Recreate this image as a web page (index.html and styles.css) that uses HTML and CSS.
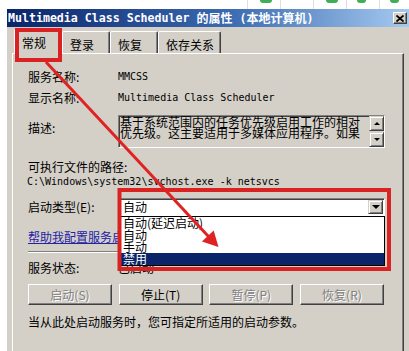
FILE: index.html
```html
<!DOCTYPE html>
<html lang="zh-CN">
<head>
<meta charset="utf-8">
<title>Multimedia Class Scheduler 的属性 (本地计算机)</title>
<link rel="stylesheet" href="styles.css">
</head>
<body>
<div class="top-strip">
  <div class="cell"><span class="blob"></span></div>
  <div class="cell"></div>
  <div class="cell"><span class="blob"></span></div>
  <div class="cell"><span class="blob narrow"></span></div>
  <div class="cell last"><span class="blob narrow"></span></div>
</div>
<div class="window">
  <div class="titlebar">
    <div class="title"><span class="t-lat">Multimedia Class Scheduler </span><span class="t-cjk">的属性</span><span class="t-lat"> (</span><span class="t-cjk">本地计算机</span><span class="t-lat">)</span></div>
    <div class="close-btn">
      <svg width="8" height="7" viewBox="0 0 8 7"><path d="M0.5 0.5 L7.5 6.5 M7.5 0.5 L0.5 6.5" stroke="#000" stroke-width="1.8" fill="none"/></svg>
    </div>
  </div>
  <div class="tabs">
    <div class="tab active">常规</div>
    <div class="tab">登录</div>
    <div class="tab">恢复</div>
    <div class="tab">依存关系</div>
  </div>
  <div class="panel">
    <div class="row r-name"><span class="label">服务名称:</span><span class="mono">MMCSS</span></div>
    <div class="row r-disp"><span class="label">显示名称:</span><span class="mono">Multimedia Class Scheduler</span></div>
    <div class="row r-desc">
      <span class="label desc-label">描述:</span>
      <div class="desc-box">
        <div class="desc-text">基于系统范围内的任务优先级启用工作的相对<br>优先级。这主要适用于多媒体应用程序。如果</div>
        <div class="vscroll">
          <span class="sbtn"><i class="tri-up"></i></span>
          <span class="sbtn"><i class="tri-down small"></i></span>
        </div>
      </div>
    </div>
    <div class="row r-pathlabel">可执行文件的路径:</div>
    <div class="row r-path mono">C:\Windows\system32\svchost.exe -k netsvcs</div>
    <div class="row r-type">
      <span class="label">启动类型(E):</span>
      <div class="combo">
        <span class="combo-val">自动</span>
        <span class="combo-btn"><i class="tri-down"></i></span>
        <ul class="dropdown">
          <li>自动(延迟启动)</li>
          <li>自动</li>
          <li>手动</li>
          <li class="sel">禁用</li>
        </ul>
      </div>
    </div>
    <div class="row r-link"><a class="link">帮助我配置服务启动选项。</a></div>
    <div class="sep"></div>
    <div class="row r-status"><span class="label">服务状态:</span><span>已启动</span></div>
    <div class="row r-buttons">
      <button class="btn" disabled>启动(S)</button>
      <button class="btn">停止(T)</button>
      <button class="btn" disabled>暂停(P)</button>
      <button class="btn" disabled>恢复(R)</button>
    </div>
    <div class="row r-note">当从此处启动服务时，您可指定所适用的启动参数。</div>
  </div>
</div>
<svg class="annot" width="409" height="351" viewBox="0 0 409 351">
  <defs>
    <filter id="soft" x="-5%" y="-5%" width="110%" height="110%"><feGaussianBlur stdDeviation="0.45"/></filter>
  </defs>
  <g filter="url(#soft)" fill="none" stroke="#d92323" stroke-width="4">
    <rect x="17" y="30" width="43" height="30"/>
    <rect x="119.5" y="190" width="269.5" height="79"/>
  </g>
  <g filter="url(#soft)">
    <line x1="46" y1="62" x2="208.5" y2="236.5" stroke="#df2424" stroke-width="3"/>
    <polygon points="218.5,247 201.9,241.4 213.7,230.6" fill="#df2424"/>
  </g>
</svg>
</body>
</html>
```

FILE: styles.css
```css
* { box-sizing: border-box; }
html, body { margin: 0; padding: 0; }
body {
  width: 409px;
  height: 351px;
  overflow: hidden;
  position: relative;
  background: #fff;
  font-family: "Noto Sans CJK SC", "Noto Sans", sans-serif;
  font-size: 12px;
  color: #000;
}

/* strip of the page behind the dialog */
.top-strip { height: 9px; display: flex; padding-left: 247px; }
.cell { width: 33px; height: 9px; border-left: 1px solid #dedede; }
.cell.last { flex: 1; }
.blob {
  display: block; width: 12px; height: 3px; margin-left: 12px;
  background: #3fae55; border-radius: 0 0 6px 6px;
}
.blob.narrow { width: 9px; margin-left: 10px; }

/* dialog */
.window { margin-left: 7px; height: 342px; background: #d4d0c8; }
.titlebar {
  height: 18px;
  display: flex; align-items: center; justify-content: space-between;
  padding: 0 2px 0 1px;
  background: linear-gradient(to right, #0a246a 0%, #3a6ab0 55%, #a6caf0 100%);
  color: #fff;
  overflow: hidden;
}
.title { display: flex; align-items: center; white-space: nowrap; font-weight: bold; line-height: 14px; }
.t-lat { font-family: "DejaVu Sans Mono", monospace; font-size: 11.6px; white-space: pre; }
.t-cjk { font-family: "Noto Sans CJK SC", sans-serif; font-size: 12px; }
.close-btn {
  width: 14px; height: 12px;
  display: flex; align-items: center; justify-content: center;
  background: #d4d0c8;
  border: 1px solid; border-color: #fff #404040 #404040 #fff;
  box-shadow: inset -1px -1px #808080;
}
.close-btn svg { display: block; }

/* tabs */
.tabs { height: 26px; display: flex; align-items: flex-end; padding-left: 7px; }
.tab {
  height: 22px; min-width: 48px;
  padding: 6px 6px 0 7px;
  line-height: 14px; white-space: nowrap;
  border: 1px solid; border-bottom: none;
  border-color: #fff #404040 transparent #fff;
  box-shadow: inset -1px 0 #808080;
  border-radius: 2px 2px 0 0;
  background: #d4d0c8;
}
.tab.active { height: 25px; margin-bottom: -1px; position: relative; z-index: 1; }

.panel {
  margin: 0 5px;
  height: 298px;
  border-left: 1px solid #fff;
  border-top: 1px solid #fff;
  border-right: 1px solid #404040;
  box-shadow: inset -1px 0 #808080;
  padding-left: 15px;
}

.row { display: flex; align-items: center; white-space: nowrap; }
.label { width: 90px; flex: none; }
.mono { font-family: "DejaVu Sans Mono", monospace; font-size: 10px; }

.r-name { margin-top: 13px; height: 20px; line-height: 20px; }
.r-disp { margin-top: 1px; height: 20px; line-height: 20px; }

.r-desc { margin-top: 7px; height: 33px; align-items: flex-start; }
.desc-label { padding-top: 6px; line-height: 14px; }
.desc-box {
  width: 267px; height: 33px;
  display: flex;
  border: 1px solid; border-color: #808080 #fff #fff #808080;
  box-shadow: inset 1px 1px #404040;
  background: #d4d0c8;
}
.desc-text { flex: 1; padding: 0 0 0 1px; line-height: 11px; }
.vscroll { width: 15px; flex: none; display: flex; flex-direction: column; justify-content: space-between; }
.sbtn {
  width: 15px; height: 15px;
  display: flex; align-items: center; justify-content: center;
  background: #d4d0c8;
  border: 1px solid; border-color: #d4d0c8 #404040 #404040 #d4d0c8;
  box-shadow: inset 1px 1px #fff, inset -1px -1px #808080;
}
.tri-up { width: 0; height: 0; border-left: 3px solid transparent; border-right: 3px solid transparent; border-bottom: 3px solid #000; }
.tri-down { width: 0; height: 0; border-left: 4px solid transparent; border-right: 4px solid transparent; border-top: 4px solid #000; }
.tri-down.small { border-left-width: 3px; border-right-width: 3px; border-top-width: 3px; }

.r-pathlabel { margin-top: 12px; height: 14px; line-height: 14px; }
.r-path { margin-top: 1px; height: 14px; line-height: 14px; margin-left: -1px; }

.r-type { margin-top: 9px; height: 18px; line-height: 18px; }
.combo {
  position: relative;
  width: 267px; height: 18px;
  display: flex; align-items: center;
  padding: 1px;
  background: #fff;
  border: 1px solid; border-color: #808080 #fff #fff #808080;
  box-shadow: inset 1px 1px #404040;
}
.combo-val { padding-left: 3px; line-height: 14px; }
.combo-btn {
  margin-left: auto;
  width: 15px; height: 14px;
  display: flex; align-items: center; justify-content: center;
  background: #d4d0c8;
  border: 1px solid; border-color: #d4d0c8 #404040 #404040 #d4d0c8;
  box-shadow: inset 1px 1px #fff, inset -1px -1px #808080;
}
.dropdown {
  position: absolute; z-index: 2;
  top: calc(100% + 1px); left: -1px;
  width: 267px; height: 50px;
  margin: 0; padding: 0; list-style: none;
  background: #fff;
  border: 1px solid #000;
}
.dropdown li { height: 12px; line-height: 12px; padding-left: 4px; }
.dropdown li.sel { background: #0a246a; color: #fff; }

.r-link { margin-top: 14px; height: 14px; line-height: 14px; }
.link { color: #2323a6; text-decoration: underline; }
.sep { margin-top: 7px; width: 357px; height: 2px; border-top: 1px solid #808080; border-bottom: 1px solid #fff; }

.r-status { margin-top: 8px; height: 14px; line-height: 14px; }

.r-buttons { margin-top: 9px; height: 21px; width: 356px; justify-content: space-between; }
.btn {
  width: 84px; height: 21px;
  padding: 0; margin: 0;
  font-family: "Noto Sans CJK SC", sans-serif; font-size: 12px; line-height: 14px;
  color: #000;
  background: #d4d0c8;
  border: 1px solid; border-color: #fff #404040 #404040 #fff;
  box-shadow: inset -1px -1px #808080;
  border-radius: 0;
}
.btn:disabled { color: #808080; text-shadow: 1px 1px 0 #fff; }

.r-note { margin-top: 10px; height: 14px; line-height: 14px; }

.annot { position: absolute; top: 0; left: 0; z-index: 10; pointer-events: none; }
```
